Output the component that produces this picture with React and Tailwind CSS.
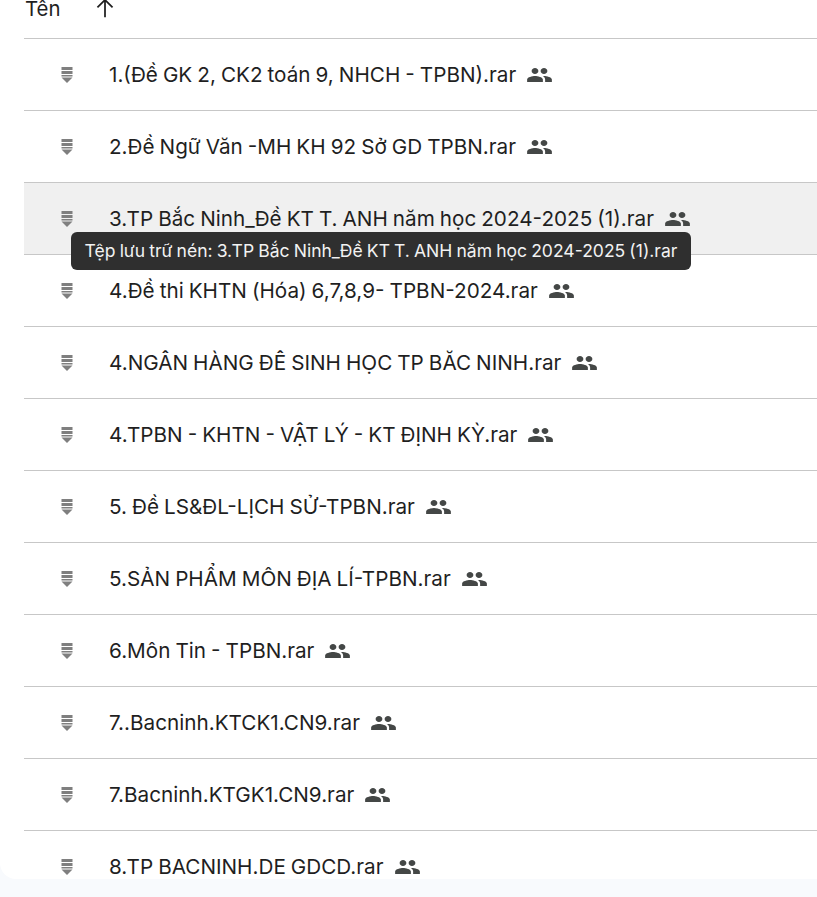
const files = [
  '1.(Đề GK 2, CK2 toán 9, NHCH - TPBN).rar',
  '2.Đề Ngữ Văn -MH KH 92 Sở GD TPBN.rar',
  '3.TP Bắc Ninh_Đề KT T. ANH năm học 2024-2025 (1).rar',
  '4.Đề thi KHTN (Hóa) 6,7,8,9- TPBN-2024.rar',
  '4.NGÂN HÀNG ĐÊ SINH HỌC TP BĂC NINH.rar',
  '4.TPBN - KHTN - VẬT LÝ - KT ĐỊNH KỲ.rar',
  '5. Đề LS&ĐL-LỊCH SỬ-TPBN.rar',
  '5.SẢN PHẨM MÔN ĐỊA LÍ-TPBN.rar',
  '6.Môn Tin - TPBN.rar',
  '7..Bacninh.KTCK1.CN9.rar',
  '7.Bacninh.KTGK1.CN9.rar',
  '8.TP BACNINH.DE GDCD.rar',
];

const RarIcon = () => (
  <svg width="12" height="16" viewBox="0 0 12 16" className="shrink-0 text-[#7f7f7f]" fill="currentColor">
    <rect x="0.5" y="0" width="11" height="3" />
    <rect x="0.5" y="4" width="11" height="3" />
    <rect x="0.5" y="8" width="11" height="1.5" />
    <path d="M0.5 10.5h11L6 16z" />
  </svg>
);

// the reference icon is a bit flatter than the stock one, hence the stretch
const SharedIcon = () => (
  <svg width="27" height="24" viewBox="0 0 24 24" preserveAspectRatio="none" className="shrink-0 text-[#444746]" fill="currentColor">
    <path d="M16 11c1.66 0 2.99-1.34 2.99-3S17.66 5 16 5c-1.66 0-3 1.34-3 3s1.34 3 3 3zm-8 0c1.66 0 2.99-1.34 2.99-3S9.66 5 8 5C6.34 5 5 6.34 5 8s1.34 3 3 3zm0 2c-2.33 0-7 1.17-7 3.5V19h14v-2.5c0-2.33-4.67-3.5-7-3.5zm8 0c-.29 0-.62.02-.97.05 1.16.84 1.97 1.97 1.97 3.45V19h6v-2.5c0-2.33-4.67-3.5-7-3.5z" />
  </svg>
);

export default function App() {
  return (
    <div className="h-[897px] overflow-hidden bg-[#f8fafd] font-['Inter',sans-serif] text-[#1f1f1f]">
      <div className="relative h-[879px] overflow-hidden rounded-bl-2xl bg-white pl-6">
        <div className="flex h-[39px] items-start gap-[30px] border-b border-[#c7c7c7] pl-px text-[20.4px] leading-[18px]">
          <span>Tên</span>
          <svg width="28" height="28" viewBox="0 0 24 24" className="-mt-1.5 text-[#1f1f1f]" fill="currentColor">
            <path d="M11.25 20V6.9l-5.2 5.2L5 11l7-7 7 7-1.05 1.1-5.2-5.2V20z" />
          </svg>
        </div>
        {files.map((name, i) => (
          <div
            key={name}
            className={`flex h-[72px] items-center border-b border-[#c7c7c7] pt-px pl-[37px] ${i === 2 ? 'bg-[#f0f0f0]' : ''}`}
          >
            <RarIcon />
            <span className="ml-[36px] whitespace-nowrap text-[20.7px] [word-spacing:-0.8px]">{name}</span>
            <span className="ml-[10px]"><SharedIcon /></span>
          </div>
        ))}
        <div className="absolute left-[71px] top-[232px] flex h-[38px] w-[620px] items-center justify-center rounded-md bg-[#2f2f2f] text-[17.55px] whitespace-nowrap text-[#f2f2f2] [word-spacing:-0.8px]">
          Tệp lưu trữ nén: 3.TP Bắc Ninh_Đề KT T. ANH năm học 2024-2025 (1).rar
        </div>
      </div>
    </div>
  );
}
